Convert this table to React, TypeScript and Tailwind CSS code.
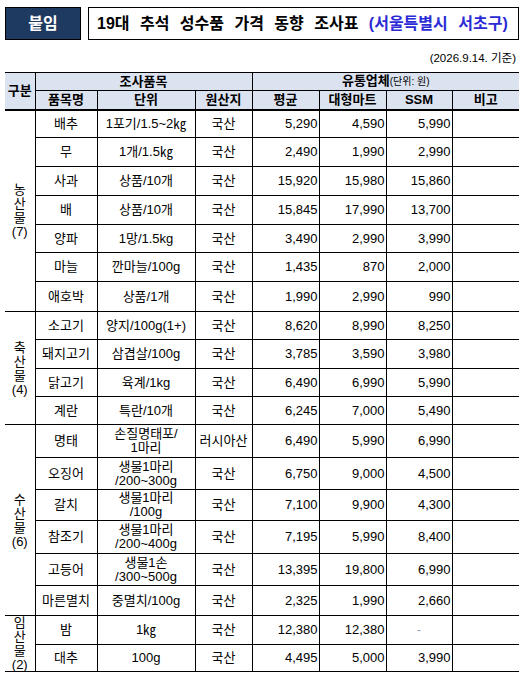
import React from "react";

type Row = [string, string[], string, string, string, string, number];

const groups: { label: string[]; rows: Row[] }[] = [
    {
        label: ["농", "산", "물", "(7)"],
        rows: [
            ["배추", ["1포기/1.5~2㎏"], "국산", "5,290", "4,590", "5,990", 28],
            ["무", ["1개/1.5㎏"], "국산", "2,490", "1,990", "2,990", 29],
            ["사과", ["상품/10개"], "국산", "15,920", "15,980", "15,860", 29],
            ["배", ["상품/10개"], "국산", "15,845", "17,990", "13,700", 29],
            ["양파", ["1망/1.5kg"], "국산", "3,490", "2,990", "3,990", 28],
            ["마늘", ["깐마늘/100g"], "국산", "1,435", "870", "2,000", 29],
            ["애호박", ["상품/1개"], "국산", "1,990", "2,990", "990", 30],
        ],
    },
    {
        label: ["축", "산", "물", "(4)"],
        rows: [
            ["소고기", ["양지/100g(1+)"], "국산", "8,620", "8,990", "8,250", 28],
            ["돼지고기", ["삼겹살/100g"], "국산", "3,785", "3,590", "3,980", 29],
            ["닭고기", ["육계/1kg"], "국산", "6,490", "6,990", "5,990", 28],
            ["계란", ["특란/10개"], "국산", "6,245", "7,000", "5,490", 28],
        ],
    },
    {
        label: ["수", "산", "물", "(6)"],
        rows: [
            ["명태", ["손질명태포/", "1마리"], "러시아산", "6,490", "5,990", "6,990", 33],
            ["오징어", ["생물1마리", "/200~300g"], "국산", "6,750", "9,000", "4,500", 32],
            ["갈치", ["생물1마리", "/100g"], "국산", "7,100", "9,900", "4,300", 31],
            ["참조기", ["생물1마리", "/200~400g"], "국산", "7,195", "5,990", "8,400", 33],
            ["고등어", ["생물1손", "/300~500g"], "국산", "13,395", "19,800", "6,990", 32],
            ["마른멸치", ["중멸치/100g"], "국산", "2,325", "1,990", "2,660", 30],
        ],
    },
    {
        label: ["임", "산", "물", "(2)"],
        rows: [
            ["밤", ["1㎏"], "국산", "12,380", "12,380", "-", 28],
            ["대추", ["100g"], "국산", "4,495", "5,000", "3,990", 26],
        ],
    },
];

const font = "font-['Liberation_Sans','Noto_Sans_CJK_KR',sans-serif]";

export default function App() {
    return (
        <div className={`w-[525px] h-[679px] bg-white text-black ${font}`}>
            <div className="flex gap-[7px] pt-[7px] pl-[5px] pr-[6px]">
                <div className="w-[76px] h-[33px] bg-[#1f3a60] border border-black flex items-center justify-center text-white font-bold text-[16px] leading-none">
                    붙임
                </div>
                <div className="flex-1 h-[33px] border border-black flex items-center pl-[8px] font-bold text-[16px] leading-none [word-spacing:6px] whitespace-nowrap">
                    19대 추석 성수품 가격 동향 조사표&nbsp;<span className="text-[#2b2bd6]">(서울특별시 서초구)</span>
                </div>
            </div>

            <div className="flex justify-end pr-[9px] pt-[12px] h-[32px] text-[11.5px] leading-[13px]">
                (2026.9.14. 기준)
            </div>

            <table className="ml-[5px] w-[514px] border-collapse table-fixed text-[13px] leading-[14px]">
                <colgroup>
                    <col className="w-[30px]"/>
                    <col className="w-[62px]"/>
                    <col className="w-[98px]"/>
                    <col className="w-[57px]"/>
                    <col className="w-[67px]"/>
                    <col className="w-[67px]"/>
                    <col className="w-[66px]"/>
                    <col className="w-[67px]"/>
                </colgroup>
                <thead className="bg-[#dce3f0] font-bold">
                    <tr className="h-[18px] border-t border-black">
                        <th rowSpan={2} className="border-r border-black font-bold p-0">구분</th>
                        <th colSpan={3} className="border-r border-b border-black font-bold p-0">조사품목</th>
                        <th colSpan={4} className="border-b border-black font-bold p-0">
                            유통업체<span className="text-[10px] font-normal">(단위: 원)</span>
                        </th>
                    </tr>
                    <tr className="h-[19px] border-b-2 border-black">
                        <th className="border-r border-black font-bold p-0">품목명</th>
                        <th className="border-r border-black font-bold p-0">단위</th>
                        <th className="border-r border-black font-bold p-0">원산지</th>
                        <th className="border-r border-black font-bold p-0">평균</th>
                        <th className="border-r border-black font-bold p-0">대형마트</th>
                        <th className="border-r border-black font-bold p-0">SSM</th>
                        <th className="font-bold p-0">비고</th>
                    </tr>
                </thead>
                <tbody>
                    {groups.map((g) =>
                        g.rows.map((r, i) => (
                            <tr key={r[0]} className="border-b border-black" style={{height: r[6]}}>
                                {i === 0 && (
                                    <td rowSpan={g.rows.length} className="border-r border-black text-center align-middle p-0">
                                        <div className="flex flex-col items-center leading-[13px] gap-px">
                                            {g.label.map((c) => (
                                                <span key={c} className="h-[13px]">{c}</span>
                                            ))}
                                        </div>
                                    </td>
                                )}
                                <td className="border-r border-black text-center p-0">{r[0]}</td>
                                <td className="border-r border-black text-center p-0">
                                    {r[1].map((u) => (
                                        <div key={u}>{u}</div>
                                    ))}
                                </td>
                                <td className="border-r border-black text-center p-0">{r[2]}</td>
                                <td className="border-r border-black text-right p-0 pr-[1px]">{r[3]}</td>
                                <td className="border-r border-black text-right p-0 pr-[1px]">{r[4]}</td>
                                {r[5] === "-" ? (
                                    <td className="border-r border-black text-center text-gray-400 p-0">-</td>
                                ) : (
                                    <td className="border-r border-black text-right p-0 pr-[1px]">{r[5]}</td>
                                )}
                                <td className="p-0"></td>
                            </tr>
                        ))
                    )}
                </tbody>
            </table>
        </div>
    );
}
